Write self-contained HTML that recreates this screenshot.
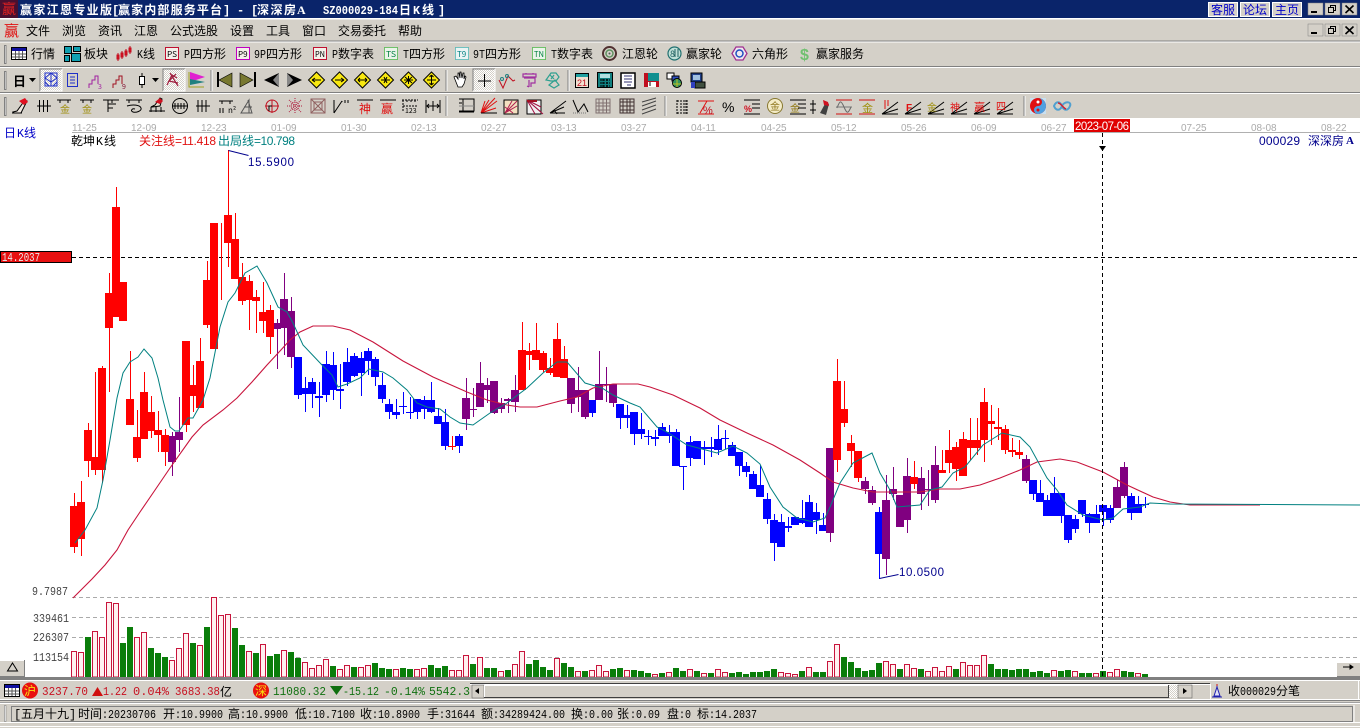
<!DOCTYPE html>
<html><head><meta charset="utf-8"><title>赢家江恩专业版</title>
<style>
html,body{margin:0;padding:0;background:#d4d0c8;width:1360px;height:728px;overflow:hidden}
svg{display:block}
text{font-family:"WenQuanYi Zen Hei","Noto Sans CJK SC","Liberation Sans",sans-serif;font-size:12px;fill:#000;white-space:pre}
.m{font-family:"Liberation Mono","WenQuanYi Zen Hei",monospace}
.a{font-family:"Liberation Sans","WenQuanYi Zen Hei",sans-serif}
.w{fill:#fff;font-weight:bold}
.ax{font-family:"Liberation Sans",sans-serif;font-size:10px;fill:#aaa}
.b{fill:#00008c}
</style></head><body>
<svg width="1360" height="728" viewBox="0 0 1360 728" xmlns="http://www.w3.org/2000/svg">
<defs><pattern id="d" width="2" height="2" patternUnits="userSpaceOnUse"><rect width="2" height="2" fill="#fff"/><rect width="1" height="1" fill="#d4d0c8"/><rect x="1" y="1" width="1" height="1" fill="#d4d0c8"/></pattern></defs>
<rect width="1360" height="728" fill="#d4d0c8"/>
<!-- title -->
<rect width="1360" height="18" fill="#0a246a"/><rect y="18" width="1360" height="1.5" fill="#fff"/>
<rect width="18" height="18" fill="#4a1030"/><text x="2" y="14" font-size="14" style="fill:#e02020;font-size:14px">赢</text>
<text class="w" x="20" y="14" textLength="92">赢家江恩专业版</text>
<text class="w m" x="112" y="14">[</text><text class="w" x="118" y="14" textLength="104">赢家内部服务平台</text><text class="w m" x="223" y="14">]</text>
<text class="w m" x="237" y="14">-</text><text class="w m" x="251" y="14">[</text><text class="w" x="257" y="14" textLength="39">深深房</text>
<text class="w" x="297" y="14" style="font-family:'Liberation Serif',serif">A</text>
<text class="w m" x="323" y="14" textLength="75" lengthAdjust="spacingAndGlyphs">SZ000029-184</text>
<text class="w" x="399" y="14">日</text><text class="w m" x="413" y="14" textLength="7" lengthAdjust="spacingAndGlyphs">K</text><text class="w" x="422" y="14">线</text><text class="w m" x="438" y="14">]</text>
<!-- title buttons -->
<g fill="#d4d0c8" stroke="#fff"><rect x="1208.5" y="2.5" width="29" height="14"/><rect x="1240.5" y="2.5" width="29" height="14"/><rect x="1272.5" y="2.5" width="29" height="14"/></g>
<text x="1211" y="14" style="fill:#0000c8">客服</text><text x="1243" y="14" style="fill:#0000c8">论坛</text><text x="1275" y="14" style="fill:#0000c8">主页</text>
<g id="wb"><rect x="1308" y="3" width="15" height="12" fill="#d4d0c8" stroke="#808080" stroke-width=".5"/><rect x="1325" y="3" width="15" height="12" fill="#d4d0c8" stroke="#808080" stroke-width=".5"/><rect x="1342" y="3" width="15" height="12" fill="#d4d0c8" stroke="#808080" stroke-width=".5"/>
<path d="M1328.5 7.5h5v5h-5zM1330.5 7.5v-2h5v5h-2" fill="none" stroke="#000"/><rect x="1311" y="11" width="6" height="2"/><path d="M1345.5 5.5l8 7.5M1353.5 5.5l-8 7.5" stroke="#000" stroke-width="1.6"/></g>
<g transform="translate(0,21)"><rect x="1308" y="3" width="15" height="12" fill="#d4d0c8" stroke="#808080" stroke-width=".5"/><rect x="1325" y="3" width="15" height="12" fill="#d4d0c8" stroke="#808080" stroke-width=".5"/><rect x="1342" y="3" width="15" height="12" fill="#d4d0c8" stroke="#808080" stroke-width=".5"/>
<path d="M1328.5 7.5h5v5h-5zM1330.5 7.5v-2h5v5h-2" fill="none" stroke="#000"/><rect x="1311" y="11" width="6" height="2"/><path d="M1345.5 5.5l8 7.5M1353.5 5.5l-8 7.5" stroke="#000" stroke-width="1.6"/></g>
<!-- menu -->
<text x="4" y="36" style="fill:#e01010;font-size:15px">赢</text>
<text x="26" y="35">文件</text><text x="62" y="35">浏览</text><text x="98" y="35">资讯</text><text x="134" y="35">江恩</text><text x="170" y="35">公式选股</text><text x="230" y="35">设置</text><text x="266" y="35">工具</text><text x="302" y="35">窗口</text><text x="338" y="35">交易委托</text><text x="398" y="35">帮助</text>
<!-- separators -->
<g fill="#808080"><rect y="40.5" width="1360" height="1"/><rect y="66" width="1360" height="1"/><rect y="92" width="1360" height="1"/></g>
<g fill="#fff"><rect y="41.5" width="1360" height="1"/><rect y="67" width="1360" height="1"/><rect y="93" width="1360" height="1"/></g>
<g stroke="#808080" fill="#fff"><rect x="4.5" y="45.5" width="1.5" height="18"/><rect x="4.5" y="71.5" width="1.5" height="18"/><rect x="4.5" y="97.5" width="1.5" height="18"/></g>
<!-- row 1 -->
<rect x="11.5" y="47.5" width="15" height="12" fill="#fff" stroke="#000"/><rect x="12" y="48" width="14" height="3" fill="#1010a0"/><path d="M12 54h14M12 57h14M15.5 51v8M19 51v8M22.5 51v8" stroke="#555"/>
<text x="31" y="58">行情</text>
<g fill="#10a0b0" stroke="#000"><rect x="64.5" y="46.5" width="7" height="7"/><rect x="73.5" y="46.5" width="7" height="5"/><rect x="64.5" y="55.5" width="5" height="6"/><rect x="71.5" y="53.5" width="9" height="8"/></g>
<text x="84" y="58">板块</text>
<g fill="#e01020" stroke="#c01020"><path d="M118 53v8M122 51v8M126 49v8M130 46v8" stroke-width="1"/><rect x="117" y="55" width="2" height="4"/><rect x="121" y="53" width="2" height="4"/><rect x="125" y="51" width="2" height="4"/><rect x="129" y="48" width="2" height="4"/></g>
<text x="137" y="58" class="m" textLength="6" lengthAdjust="spacingAndGlyphs">K</text><text x="143" y="58">线</text>
<g font-size="8" style="font-family:'Liberation Sans',sans-serif">
<rect x="165.5" y="47.5" width="13" height="12" fill="#f4f0ea" stroke="#c01030"/><text x="167" y="57" style="font-size:8px" textLength="10" lengthAdjust="spacingAndGlyphs">PS</text>
<rect x="236.5" y="47.5" width="13" height="12" fill="#f4f0ea" stroke="#c000c0"/><text x="238" y="57" style="font-size:8px">P9</text>
<rect x="313.5" y="47.5" width="13" height="12" fill="#f4f0ea" stroke="#c01030"/><text x="315" y="57" style="font-size:8px" textLength="10" lengthAdjust="spacingAndGlyphs">PN</text>
<rect x="384.5" y="47.5" width="13" height="12" fill="#eaf4ea" stroke="#00a000" stroke-dasharray="1 1"/><text x="386" y="57" style="font-size:8px;fill:#008040" textLength="10" lengthAdjust="spacingAndGlyphs">TS</text>
<rect x="455.5" y="47.5" width="13" height="12" fill="#eaf4f4" stroke="#00a0a0" stroke-dasharray="1 1"/><text x="457" y="57" style="font-size:8px;fill:#008080">T9</text>
<rect x="532.5" y="47.5" width="13" height="12" fill="#eaf4ea" stroke="#00a000" stroke-dasharray="1 1"/><text x="534" y="57" style="font-size:8px;fill:#008040" textLength="10" lengthAdjust="spacingAndGlyphs">TN</text></g>
<g><text x="184" y="58" class="m" textLength="6" lengthAdjust="spacingAndGlyphs">P</text><text x="190" y="58">四方形</text>
<text x="254" y="58" class="m" textLength="12" lengthAdjust="spacingAndGlyphs">9P</text><text x="266" y="58">四方形</text>
<text x="332" y="58" class="m" textLength="6" lengthAdjust="spacingAndGlyphs">P</text><text x="338" y="58">数字表</text>
<text x="403" y="58" class="m" textLength="6" lengthAdjust="spacingAndGlyphs">T</text><text x="409" y="58">四方形</text>
<text x="473" y="58" class="m" textLength="12" lengthAdjust="spacingAndGlyphs">9T</text><text x="485" y="58">四方形</text>
<text x="551" y="58" class="m" textLength="6" lengthAdjust="spacingAndGlyphs">T</text><text x="557" y="58">数字表</text>
<text x="622" y="58">江恩轮</text><text x="686" y="58">赢家轮</text><text x="752" y="58">六角形</text><text x="816" y="58">赢家服务</text></g>
<g fill="none"><circle cx="609.5" cy="53.5" r="6.5" stroke="#503030" stroke-width="2"/><circle cx="609.5" cy="53.5" r="3.5" stroke="#609060" stroke-width="1.5"/><circle cx="609.5" cy="53.5" r="1" fill="#555"/>
<circle cx="674.5" cy="53.5" r="6.5" stroke="#207070" stroke-width="1.2" fill="#c0e0d8"/><text x="670" y="57" style="font-size:9px;fill:#206060" >8</text><path d="M675 49v8M678 49v8" stroke="#206060"/>
<path d="M736 47h7l4 6.500l-4 6.500h-7l-4-6.500z" stroke="#a03090" stroke-width="1.3" fill="#f0e8f0"/><circle cx="739.500" cy="53.500" r="3.500" stroke="#2050c0" stroke-width="1.500"/></g>
<text x="800" y="60" style="font-size:16px;fill:#70c070;font-family:'Liberation Sans',sans-serif;font-weight:bold">$</text>
<!-- row 2 -->
<text x="13" y="86" style="font-weight:bold;font-size:13px">日</text><path d="M29 78h7l-3.500 4z"/>
<rect x="40" y="69" width="22" height="22" fill="url(#d)"/>
<path d="M40 91V69h22" fill="none" stroke="#808080"/><path d="M62 69v22H40" fill="none" stroke="#fff"/>
<g fill="none" stroke="#2030c8"><path d="M45 73h12v13H45zM45 78l6-5 6 5-6 4zM45 82l4 4M57 82l-4 4M51 73v13"/>
<path d="M67.500 73.500h10v13h-10zM70 77h5M70 80h5M70 83h5"/></g>
<path d="M89 88v-4h3v-4h3v-4h3v8M105 81" fill="none" stroke="#a020a0"/><text x="98" y="89" style="font-size:7px;fill:#a020a0">3</text>
<path d="M113 88v-4h3v-4h3v-4h3v8" fill="none" stroke="#a01020"/><text x="122" y="89" style="font-size:7px;fill:#801030">9</text>
<path d="M142 73v15" stroke="#000"/><rect x="139.500" y="76.500" width="5" height="8" fill="#fff" stroke="#000"/><path d="M152 78h7l-3.500 4z"/>
<rect x="163" y="69" width="22" height="22" fill="url(#d)"/><path d="M163 91V69h22" fill="none" stroke="#808080"/><path d="M185 69v22h-22" fill="none" stroke="#fff"/>
<g fill="none" stroke="#a02040" stroke-width="1.2"><path d="M167 85l5-10 5 3M170 73l8 13M176 74l-7 7 9 2"/></g>
<path d="M189 72v15h15" fill="none" stroke="#a0a020"/><path d="M190 72l15 5-15 5z" fill="#e020d0"/><path d="M190 79l15 3-15 3z" fill="#208080"/>
<path d="M211 70v21" stroke="#808080"/><path d="M212 70v21" stroke="#fff"/>
<g fill="#787830" stroke="#000" stroke-width=".6"><path d="M232 73v14l-13-7z"/><path d="M240 73v14l13-7z"/></g><rect x="217" y="72" width="2" height="15"/><rect x="254" y="72" width="2" height="15"/>
<path d="M279 73l-15 7 15 7z" fill="#000"/><path d="M279 73v14l-6-7z" fill="#888"/><path d="M287 73l15 7-15 7z" fill="#000"/><path d="M287 73v14l6-7z" fill="#888"/>
<g fill="#f8e810" stroke="#000"><path d="M316.500 72l8 8-8 8-8-8z"/><path d="M339.500 72l8 8-8 8-8-8z"/><path d="M362.500 72l8 8-8 8-8-8z"/><path d="M385.500 72l8 8-8 8-8-8z"/><path d="M408.500 72l8 8-8 8-8-8z"/><path d="M431.500 72l8 8-8 8-8-8z"/></g>
<g stroke="#000" fill="none"><path d="M312 80h9M312 80l3-2M312 80l3 2M335 80h9M344 80l-3-2M344 80l-3 2M358 80h9M358 80l2-2M358 80l2 2M367 80l-2-2M367 80l-2 2M381 80h9M384 77l3 6M387 77l-3 6M404 80h9M408.500 76v8M405 77l7 6M412 77l-7 6M431.500 75v10M427 80h9M431.500 75l-2 2M431.500 75l2 2M431.500 85l-2-2M431.500 85l2-2"/></g>
<path d="M446 70v21" stroke="#808080"/><path d="M447 70v21" stroke="#fff"/>
<path d="M456 82l-2-5 2-1 2 3v-6h1l1 5v-6h1l1 6 1-5h1v6l1-3 1 1-2 7-2 3h-4z" fill="#fff" stroke="#000" stroke-width=".8"/>
<rect x="473" y="69" width="22" height="22" fill="url(#d)"/><path d="M473 91V69h22" fill="none" stroke="#808080"/><path d="M495 69v22h-22" fill="none" stroke="#fff"/><path d="M484.500 74v13M478 81h13" stroke="#000"/>
<path d="M499 80l4 8 5-12 5 5 2-1" fill="none" stroke="#c01020"/><circle cx="502" cy="79" r="1.500" fill="none" stroke="#208080"/><circle cx="507" cy="76" r="1.500" fill="none" stroke="#208080"/>
<g fill="none" stroke="#a030a0" stroke-width="1.2"><path d="M523 74h13v3h-13zM526 74v-1M533 74v-1M524 78h11v5h-4v4M529 80v7M529 87l-2-1"/></g>
<g fill="none" stroke="#30a090" stroke-width="1.2"><path d="M546 80l5-7 5 0 3 4-3 4-5 0zM549 85l6-5 4 5-5 3zM550 75l4 4M554 75l-3 4"/></g>
<path d="M568 70v21" stroke="#808080"/><path d="M569 70v21" stroke="#fff"/>
<rect x="575.500" y="73.500" width="13" height="14" fill="#f0e0d0" stroke="#000"/><rect x="576" y="74" width="12" height="3" fill="#20a0a0"/><text x="577" y="86" style="font-size:9px;fill:#c01020;font-family:'Liberation Sans',sans-serif" textLength="10">21</text>
<rect x="597.500" y="72.500" width="15" height="15" fill="#108080" stroke="#000"/><rect x="600" y="74" width="10" height="4" fill="#b0e0e0"/><path d="M600 80h10M600 83h10M600 86h10M603 79v8M607 79v8" stroke="#000" stroke-dasharray="2 1"/>
<rect x="621" y="73" width="14" height="15" fill="#ffffff" stroke="#000" stroke-width="1.500"/><path d="M624 76h8M624 79h8M624 82h8M627 85h4" stroke="#303070"/>
<rect x="644" y="73" width="15" height="14" fill="#c01020"/><rect x="648" y="73" width="11" height="8" fill="#109090"/><rect x="648" y="82" width="8" height="5" fill="#fff"/><path d="M650 82v4" stroke="#000"/>
<rect x="667" y="73" width="7" height="6" fill="#fff" stroke="#000"/><rect x="672" y="76" width="7" height="5" fill="#3050c0" stroke="#000"/><circle cx="677" cy="83" r="4.500" fill="#309060" stroke="#000"/><path d="M673 84h8M677 79v8" stroke="#c0c020"/>
<rect x="691" y="73" width="11" height="9" fill="#20408a" stroke="#000"/><rect x="693" y="75" width="7" height="5" fill="#a0c0e0"/><rect x="695" y="82" width="10" height="6" fill="#405040" stroke="#000"/><rect x="691" y="82" width="4" height="6" fill="#3040c0"/>
<!-- row 3 -->
<g transform="translate(0,1)"><path d="M13 111l4-1 8-11 2 1-6 12-7 0z" fill="#f0e8e0" stroke="#000"/><path d="M19 100l6-3 3 4-4 3z" fill="#e01020"/><path d="M12 112h10" stroke="#000"/></g>
<g fill="none" stroke="#000"><path d="M37 106h14M39.500 100v12M43.500 100v12M47.500 100v12"/>
<path d="M57 100h14M60 100v3M68 100v3M80 100h14M83 100v3M91 100v3"/>
<path d="M103 100h16M108 100v12M108 104h8M108 108h5M112 100v3"/><path d="M126 100h16M129 100v3M139 100v3M127 106c6-2 13-1 14 2s-5 5-8 4-1-4 2-3"/>
<path d="M149 111h16M151 107v5M156 107v5M161 107v5"/><circle cx="180" cy="106" r="7.500"/><path d="M173 106h15M175 103v6M178 103v6M181 103v6M184 103v6"/><path d="M196 106h14M198 100v12M202 100v12M206 100v12"/>
<path d="M219 101h14M222 101v3M230 101v3M220 108v5M223 108v5"/></g>
<text x="228" y="113" style="font-size:8px">n²</text>
<text x="60" y="113" style="font-size:10px;fill:#a09010">金</text><text x="82" y="113" style="font-size:10px;fill:#a09010">金</text>
<path d="M151 107l4-2 5-7 2 1-2 7-8 1z" fill="#e8e0d0" stroke="#000"/><path d="M155 102l5-4 3 3-3 3z" fill="#d01020"/>
<path d="M241 113l8-13v13zM244 107h8M248 100l4 13h-11" fill="none" stroke="#555"/>
<g fill="none" stroke="#c01020"><circle cx="272" cy="106" r="6"/><path d="M265 106h14M272 100v13"/></g><path d="M272 106h-3v5" stroke="#000" fill="none"/>
<g fill="none" stroke="#b02040" stroke-dasharray="1 1"><path d="M287 106h16M295 98v16M289 100l12 12M301 100l-12 12"/><circle cx="295" cy="106" r="4"/></g>
<g fill="none" stroke="#906060"><rect x="311" y="99" width="14" height="14"/><rect x="314" y="102" width="8" height="8"/><path d="M311 99l14 14M325 99l-14 14"/></g>
<path d="M334 113v-13M334 113l8-12M342 101v1M345 100v3M348 100v3" fill="none" stroke="#000"/>
<path d="M357 100h16" stroke="#000"/><text x="359" y="113" style="font-size:12px;fill:#e01010">神</text>
<path d="M380 100h16" stroke="#000"/><text x="381" y="113" style="font-size:12px;fill:#e01010">赢</text>
<path d="M402 100h16M403 100v12M407 100v3M411 100v3M415 100v3M403 106h15" fill="none" stroke="#000" stroke-dasharray="2 1"/><text x="405" y="113" style="font-size:7px">123</text>
<path d="M426 100v13M440 100v13M427 106h12M429 104l-2 2 2 2M437 104l2 2-2 2M433 101v10" fill="none" stroke="#000"/>
<path d="M446 96v20" stroke="#808080"/><path d="M447 96v20" stroke="#fff"/>
<path d="M459 99h15v12h-15M463 99v13M459 112h15M459 103h3" fill="none" stroke="#000"/><path d="M459 106h15" stroke="#888"/>
<g fill="none" stroke="#e01010"><path d="M481 113l16-12M481 113l14-15M481 113l8-13M481 113l4-12M481 113l15-5"/><path d="M481 113h16" stroke="#000"/></g>
<rect x="504" y="100" width="14" height="14" fill="#f4e0c0" stroke="#000"/><path d="M505 113l12-12M505 113l7-12M505 113l12-7M505 107l8 6" stroke="#b02050" fill="none"/>
<rect x="527" y="100" width="14" height="14" fill="#f0f0f0" stroke="#000"/><path d="M527 100l16 14M527 100l14 7M527 100l8 14M527 100l14 12" stroke="#a01040" fill="none"/><rect x="527" y="100" width="10" height="2" fill="#a01020"/>
<path d="M550 113l16-12M550 113l14-6M550 113h15M554 110l3 4" fill="none" stroke="#000"/>
<path d="M573 100l5 12 6-8 4 8" fill="none" stroke="#000"/><path d="M573 113h14" stroke="#777" stroke-dasharray="1 1"/>
<g fill="none" stroke="#807070"><rect x="596" y="99" width="14" height="14"/><path d="M599 99v14M603 99v14M606.500 99v14M596 103h14M596 106h14M596 110h14"/></g>
<g fill="none" stroke="#403030"><rect x="620" y="99" width="14" height="14"/><path d="M623 99v14M627 99v14M630 99v14M620 102h14M620 106h14M620 110h14"/></g>
<path d="M642 106l14-5M642 110l14-5M642 114l14-5M642 102l14-4" fill="none" stroke="#444"/>
<path d="M665 96v20" stroke="#808080"/><path d="M666 96v20" stroke="#fff"/>
<path d="M677 100v14M677 101h12M680 104h8M680 107h8M680 110h8M677 113h12M686 100v14" fill="none" stroke="#000" stroke-dasharray="2 1"/>
<path d="M698 101h16M698 114h16M700 113l7-12" fill="none" stroke="#e01010"/><text x="703" y="114" style="font-size:11px;fill:#c01020;font-family:'Liberation Sans',sans-serif">%</text>
<text x="722" y="112" style="font-size:14px;font-family:'Liberation Sans',sans-serif">%</text>
<path d="M744 100h16M744 114h16" stroke="#000"/><path d="M752 104h8M752 108h8" stroke="#000"/><text x="744" y="112" style="font-size:9px;fill:#d01020;font-family:'Liberation Sans',sans-serif;font-weight:bold">%</text>
<circle cx="775" cy="106" r="7.500" fill="#f4ecc8" stroke="#887830"/><text x="770" y="110" style="font-size:10px;fill:#907820">金</text>
<path d="M790 100h16M790 114h16M798 104h8M798 108h8" stroke="#000"/><text x="790" y="112" style="font-size:10px;fill:#907810">金</text>
<path d="M813 100v14M810 104h6M810 110h6" stroke="#000"/><path d="M820 113l6-11 3 2-3 11z" fill="#404040"/><path d="M823 100l5 2 1 4-5-1z" fill="#d01020"/>
<path d="M836 100h16M836 114h16" stroke="#d01010"/><path d="M837 108c3-8 4-8 7-1s4 7 7 0" fill="none" stroke="#666"/><path d="M836 107h16" stroke="#777"/>
<path d="M859 100h16M859 114h16" stroke="#d01010"/><text x="862" y="112" style="font-size:11px;fill:#a09010">金</text>
<path d="M882 114l16-12M882 114l16-5M882 114h16" fill="none" stroke="#000"/><path d="M885 100v9" stroke="#e01010"/><path d="M888 100v6" stroke="#e01010"/>
<path d="M905 114l16-12M905 114l16-5M905 114h16" fill="none" stroke="#000"/><text x="906" y="111" style="font-size:10px;fill:#e01010;font-weight:bold;font-family:'Liberation Sans',sans-serif">F</text>
<path d="M928 114l16-12M928 114l16-5M928 114h16" fill="none" stroke="#000"/><text x="927" y="111" style="font-size:10px;fill:#a09010">金</text>
<path d="M951 114l16-12M951 114l16-5M951 114h16" fill="none" stroke="#000"/><text x="950" y="111" style="font-size:10px;fill:#e01010">神</text>
<path d="M974 114l16-12M974 114l16-5M974 114h16" fill="none" stroke="#000"/><text x="974" y="111" style="font-size:11px;fill:#e01010">赢</text>
<path d="M997 114l16-12M997 114l16-5M997 114h16" fill="none" stroke="#000"/><text x="996" y="110" style="font-size:10px;fill:#e01010">四</text>
<path d="M1024 96v20" stroke="#808080"/><path d="M1025 96v20" stroke="#fff"/>
<rect x="1030" y="98" width="16" height="16" fill="#c8e0f0"/><circle cx="1038" cy="106" r="8" fill="#e01010"/><path d="M1038 98a8 8 0 0 1 0 16a4 4 0 0 1 0-8a4 4 0 0 0 0-8z" fill="#50a0e0"/><circle cx="1038" cy="102" r="1.500" fill="#fff"/><circle cx="1038" cy="110" r="1.500" fill="#e01010"/>
<path d="M1054 106c2-5 6-5 8 0s6 5 8 0s-6-5-8 0s-6 5-8 0z" fill="none" stroke="#50a0d0" stroke-width="2"/><path d="M1058 103c3 0 5 5 8 6" fill="none" stroke="#d02030" stroke-width="1.500"/>
<!-- chart bg -->
<rect y="118" width="1360" height="559" fill="#fff"/>
<path d="M72 132.500H1360" stroke="#b0b0b0"/>
<g class="ax"><text class="ax" x="72" y="131">11-25</text><text class="ax" x="131" y="131">12-09</text><text class="ax" x="201" y="131">12-23</text><text class="ax" x="271" y="131">01-09</text><text class="ax" x="341" y="131">01-30</text><text class="ax" x="411" y="131">02-13</text><text class="ax" x="481" y="131">02-27</text><text class="ax" x="551" y="131">03-13</text><text class="ax" x="621" y="131">03-27</text><text class="ax" x="691" y="131">04-11</text><text class="ax" x="761" y="131">04-25</text><text class="ax" x="831" y="131">05-12</text><text class="ax" x="901" y="131">05-26</text><text class="ax" x="971" y="131">06-09</text><text class="ax" x="1041" y="131">06-27</text><text class="ax" x="1181" y="131">07-25</text><text class="ax" x="1251" y="131">08-08</text><text class="ax" x="1321" y="131">08-22</text></g>
<rect x="1074" y="119" width="56" height="13" fill="#e00000"/><text class="a" x="1075" y="130" style="fill:#fff;font-size:11.500px" textLength="54">2023-07-06</text>
<text x="4" y="137" style="fill:#0000c8">日</text><text class="m" x="17" y="137" style="fill:#0000c8" textLength="7" lengthAdjust="spacingAndGlyphs">K</text><text x="24" y="137" style="fill:#0000c8">线</text>
<text x="71" y="145">乾坤</text><text class="m" x="96" y="145" textLength="7" lengthAdjust="spacingAndGlyphs">K</text><text x="104" y="145">线</text>
<text x="139" y="145" style="fill:#e01010">关注线</text><text class="a" x="175" y="145" style="fill:#e01010" textLength="41">=11.418</text>
<text x="218" y="145" style="fill:#008080">出局线</text><text class="a" x="254" y="145" style="fill:#008080" textLength="41">=10.798</text>
<text class="a" x="1259" y="145" style="fill:#00008c" textLength="41">000029</text><text x="1308" y="145" style="fill:#00008c">深深房</text><text x="1346" y="144" style="fill:#00008c;font-family:'Liberation Serif',serif;font-weight:bold;font-size:11px">A</text>
<!-- grid -->
<g stroke="#aaa" stroke-dasharray="4 3"><path d="M72 597.500H1360M72 617.500H1360M72 637.500H1360M72 657.500H1360"/></g>
<path d="M72 257.500H1360" stroke="#000" stroke-dasharray="4 3"/>
<rect x="0.500" y="251.500" width="71" height="11" fill="#e81010" stroke="#000"/><text class="m" x="2" y="261" style="fill:#e8e8e8" textLength="38" lengthAdjust="spacingAndGlyphs">14.2037</text>
<text class="m" x="32" y="595" style="fill:#444" textLength="36" lengthAdjust="spacingAndGlyphs">9.7987</text>
<text class="m" x="33" y="622" style="fill:#444" textLength="36" lengthAdjust="spacingAndGlyphs">339461</text>
<text class="m" x="33" y="641" style="fill:#444" textLength="36" lengthAdjust="spacingAndGlyphs">226307</text>
<text class="m" x="33" y="661" style="fill:#444" textLength="36" lengthAdjust="spacingAndGlyphs">113154</text>
<!-- volumes -->
<path fill="#0a7d0a" d="M85 637h6V677h-6zM120 643h6V677h-6zM127 627h6V677h-6zM148 648h6V677h-6zM155 653h6V677h-6zM162 657h6V677h-6zM190 643h6V677h-6zM204 627h6V677h-6zM232 628h6V677h-6zM239 645h6V677h-6zM253 653h6V677h-6zM267 656h6V677h-6zM274 654h6V677h-6zM288 652h6V677h-6zM295 658h6V677h-6zM330 666h6V677h-6zM351 667h6V677h-6zM372 663h6V677h-6zM379 668h6V677h-6zM386 669h6V677h-6zM400 668h6V677h-6zM407 669h6V677h-6zM428 665h6V677h-6zM435 668h6V677h-6zM442 666h6V677h-6zM470 664h6V677h-6zM484 668h6V677h-6zM491 668h6V677h-6zM505 670h6V677h-6zM526 664h6V677h-6zM533 660h6V677h-6zM540 667h6V677h-6zM547 670h6V677h-6zM561 663h6V677h-6zM568 667h6V677h-6zM582 671h6V677h-6zM610 669h6V677h-6zM617 668h6V677h-6zM631 670h6V677h-6zM638 671h6V677h-6zM645 673h6V677h-6zM659 673h6V677h-6zM673 668h6V677h-6zM680 671h6V677h-6zM694 671h6V677h-6zM708 673h6V677h-6zM729 673h6V677h-6zM736 672h6V677h-6zM743 674h6V677h-6zM750 672h6V677h-6zM757 672h6V677h-6zM764 671h6V677h-6zM771 669h6V677h-6zM799 671h6V677h-6zM813 672h6V677h-6zM820 672h6V677h-6zM841 657h6V677h-6zM848 662h6V677h-6zM855 668h6V677h-6zM862 671h6V677h-6zM869 670h6V677h-6zM876 663h6V677h-6zM897 669h6V677h-6zM918 669h6V677h-6zM953 669h6V677h-6zM988 664h6V677h-6zM995 669h6V677h-6zM1002 669h6V677h-6zM1009 670h6V677h-6zM1016 669h6V677h-6zM1023 669h6V677h-6zM1030 672h6V677h-6zM1037 671h6V677h-6zM1044 673h6V677h-6zM1058 671h6V677h-6zM1065 670h6V677h-6zM1079 673h6V677h-6zM1086 673h6V677h-6zM1100 671h6V677h-6zM1121 671h6V677h-6zM1128 672h6V677h-6zM1142 674h6V677h-6z"/>
<path fill="#fff0f0" stroke="#c8143c" d="M71.500 651.500h5V677h-5zM78.500 652.500h5V677h-5zM92.500 631.500h5V677h-5zM99.500 637.500h5V677h-5zM106.500 602.500h5V677h-5zM113.500 603.500h5V677h-5zM134.500 637.500h5V677h-5zM141.500 632.500h5V677h-5zM169.500 660.500h5V677h-5zM176.500 648.500h5V677h-5zM183.500 633.500h5V677h-5zM197.500 645.500h5V677h-5zM211.500 597.500h5V677h-5zM218.500 615.500h5V677h-5zM225.500 614.500h5V677h-5zM246.500 651.500h5V677h-5zM260.500 644.500h5V677h-5zM281.500 650.500h5V677h-5zM302.500 662.500h5V677h-5zM309.500 668.500h5V677h-5zM316.500 665.500h5V677h-5zM323.500 659.500h5V677h-5zM337.500 669.500h5V677h-5zM344.500 665.500h5V677h-5zM358.500 667.500h5V677h-5zM365.500 665.500h5V677h-5zM393.500 669.500h5V677h-5zM414.500 669.500h5V677h-5zM421.500 668.500h5V677h-5zM449.500 670.500h5V677h-5zM456.500 670.500h5V677h-5zM463.500 655.500h5V677h-5zM477.500 657.500h5V677h-5zM498.500 671.500h5V677h-5zM512.500 664.500h5V677h-5zM519.500 651.500h5V677h-5zM554.500 658.500h5V677h-5zM575.500 671.500h5V677h-5zM589.500 670.500h5V677h-5zM596.500 665.500h5V677h-5zM603.500 671.500h5V677h-5zM624.500 670.500h5V677h-5zM652.500 674.500h5V677h-5zM666.500 672.500h5V677h-5zM687.500 669.500h5V677h-5zM701.500 673.500h5V677h-5zM715.500 669.500h5V677h-5zM722.500 672.500h5V677h-5zM778.500 672.500h5V677h-5zM785.500 673.500h5V677h-5zM792.500 674.500h5V677h-5zM806.500 667.500h5V677h-5zM827.500 661.500h5V677h-5zM834.500 644.500h5V677h-5zM883.500 661.500h5V677h-5zM890.500 664.500h5V677h-5zM904.500 664.500h5V677h-5zM911.500 668.500h5V677h-5zM925.500 671.500h5V677h-5zM932.500 667.500h5V677h-5zM939.500 671.500h5V677h-5zM946.500 666.500h5V677h-5zM960.500 662.500h5V677h-5zM967.500 665.500h5V677h-5zM974.500 665.500h5V677h-5zM981.500 655.500h5V677h-5zM1051.500 670.500h5V677h-5zM1072.500 671.500h5V677h-5zM1093.500 673.500h5V677h-5zM1107.500 672.500h5V677h-5zM1114.500 669.500h5V677h-5zM1135.500 673.500h5V677h-5z"/>
<!-- blue candles -->
<path fill="#0000ff" d="M298 357h1V399h-1zM294 357h8V395h-8zM305 377h1V412h-1zM301 388h8V394h-8zM312 378h1V408h-1zM308 382h8V394h-8zM319 382h1V417h-1zM315 396h8V398h-8zM326 351h1V402h-1zM322 364h8V395h-8zM333 352h1V400h-1zM329 365h8V390h-8zM340 364h1V409h-1zM336 389h8V391h-8zM347 348h1V386h-1zM343 362h8V382h-8zM354 353h1V377h-1zM350 356h8V376h-8zM361 352h1V396h-1zM357 358h8V373h-8zM368 348h1V375h-1zM364 351h8V361h-8zM375 357h1V386h-1zM371 359h8V377h-8zM382 373h1V403h-1zM378 385h8V399h-8zM389 399h1V419h-1zM385 404h8V412h-8zM396 399h1V419h-1zM392 412h8V415h-8zM403 392h1V414h-1zM399 406h8V407h-8zM410 397h1V419h-1zM406 412h8V413h-8zM417 399h1V419h-1zM413 399h8V412h-8zM424 396h1V419h-1zM420 400h8V409h-8zM431 382h1V413h-1zM427 400h8V412h-8zM438 408h1V424h-1zM434 416h8V424h-8zM445 409h1V450h-1zM441 422h8V446h-8zM459 434h1V453h-1zM455 436h8V446h-8z
M592 400h1V417h-1zM588 400h8V413h-8zM620 404h1V429h-1zM616 404h8V418h-8zM627 405h1V428h-1zM623 415h8V418h-8zM634 412h1V445h-1zM630 412h8V434h-8zM641 413h1V439h-1zM637 429h8V434h-8zM648 430h1V445h-1zM644 436h8V437h-8zM655 430h1V446h-1zM651 437h8V439h-8zM662 423h1V436h-1zM658 427h8V436h-8zM669 425h1V443h-1zM665 432h8V436h-8zM676 429h1V466h-1zM672 432h8V466h-8zM683 466h1V490h-1zM679 466h8V467h-8zM690 436h1V466h-1zM686 442h8V458h-8zM697 441h1V459h-1zM693 441h8V459h-8zM704 441h1V465h-1zM700 447h8V449h-8zM711 437h1V457h-1zM707 447h8V449h-8zM718 425h1V455h-1zM714 439h8V450h-8zM725 430h1V449h-1zM721 438h8V439h-8zM732 442h1V456h-1zM728 445h8V456h-8zM739 452h1V476h-1zM735 452h8V466h-8zM746 462h1V477h-1zM742 466h8V472h-8zM753 471h1V489h-1zM749 474h8V489h-8zM760 465h1V497h-1zM756 485h8V497h-8zM767 493h1V524h-1zM763 499h8V519h-8zM774 514h1V561h-1zM770 520h8V543h-8zM781 514h1V547h-1zM777 522h8V547h-8zM788 517h1V532h-1zM784 526h8V528h-8zM795 517h1V525h-1zM791 517h8V525h-8zM802 500h1V524h-1zM798 518h8V523h-8zM809 495h1V527h-1zM805 502h8V527h-8zM816 503h1V534h-1zM812 512h8V520h-8zM823 513h1V531h-1zM819 525h8V531h-8zM879 507h1V579h-1zM875 512h8V554h-8z
M1033 480h1V500h-1zM1029 480h8V494h-8zM1040 480h1V502h-1zM1036 493h8V502h-8zM1047 495h1V516h-1zM1043 500h8V516h-8zM1054 477h1V516h-1zM1050 493h8V516h-8zM1061 493h1V523h-1zM1057 493h8V516h-8zM1068 515h1V543h-1zM1064 515h8V540h-8zM1075 515h1V533h-1zM1071 519h8V529h-8zM1082 500h1V517h-1zM1078 500h8V514h-8zM1089 513h1V533h-1zM1085 514h8V523h-8zM1096 505h1V523h-1zM1092 514h8V523h-8zM1103 505h1V526h-1zM1099 505h8V512h-8zM1110 505h1V523h-1zM1106 508h8V520h-8zM1131 493h1V520h-1zM1127 496h8V513h-8zM1138 496h1V513h-1zM1134 504h8V513h-8zM1145 497h1V508h-1zM1141 504h8V505h-8z"/>
<!-- purple candles -->
<path fill="#800080" d="M172 432h1V476h-1zM168 436h8V462h-8zM179 397h1V452h-1zM175 432h8V440h-8zM277 319h1V369h-1zM273 323h8V329h-8zM284 273h1V355h-1zM280 299h8V328h-8zM291 297h1V368h-1zM287 311h8V357h-8zM466 378h1V430h-1zM462 398h8V419h-8zM473 388h1V417h-1zM469 409h8V410h-8zM480 362h1V407h-1zM476 383h8V407h-8zM487 378h1V403h-1zM483 385h8V390h-8zM494 381h1V414h-1zM490 381h8V413h-8zM501 398h1V413h-1zM497 403h8V409h-8zM508 398h1V413h-1zM504 399h8V401h-8zM515 375h1V412h-1zM511 390h8V402h-8zM571 378h1V413h-1zM567 378h8V404h-8zM578 367h1V412h-1zM574 390h8V397h-8zM585 390h1V419h-1zM581 390h8V417h-8zM599 351h1V400h-1zM595 384h8V400h-8zM606 367h1V402h-1zM602 384h8V385h-8zM613 384h1V407h-1zM609 384h8V403h-8zM830 448h1V542h-1zM826 448h8V533h-8zM865 477h1V494h-1zM861 481h8V489h-8zM872 486h1V505h-1zM868 490h8V503h-8zM886 475h1V575h-1zM882 500h8V559h-8zM893 467h1V500h-1zM889 489h8V494h-8zM900 495h1V527h-1zM896 495h8V527h-8zM907 458h1V533h-1zM903 476h8V520h-8zM921 467h1V510h-1zM917 478h8V494h-8zM928 470h1V506h-1zM924 489h8V490h-8zM935 446h1V503h-1zM931 465h8V500h-8zM1026 455h1V483h-1zM1022 459h8V481h-8zM1117 480h1V508h-1zM1113 487h8V508h-8zM1124 462h1V498h-1zM1120 467h8V496h-8z"/>
<!-- red candles -->
<path fill="#ff0000" d="M74 493h1V553h-1zM70 506h8V547h-8zM81 481h1V556h-1zM77 502h8V539h-8zM88 423h1V477h-1zM84 430h8V461h-8zM95 372h1V475h-1zM91 457h8V470h-8zM102 366h1V483h-1zM98 368h8V470h-8zM109 273h1V392h-1zM105 293h8V328h-8zM116 187h1V317h-1zM112 207h8V317h-8zM119 282h8V321h-8zM130 351h1V425h-1zM126 399h8V425h-8zM137 410h1V462h-1zM133 437h8V458h-8zM144 372h1V439h-1zM140 392h8V439h-8zM151 396h1V438h-1zM147 412h8V431h-8zM158 411h1V452h-1zM154 430h8V435h-8zM165 429h1V466h-1zM161 435h8V452h-8zM186 341h1V432h-1zM182 341h8V425h-8zM193 365h1V412h-1zM189 385h8V396h-8zM200 338h1V408h-1zM196 361h8V408h-8zM207 261h1V328h-1zM203 280h8V325h-8zM214 223h1V349h-1zM210 223h8V349h-8zM221 223h1V300h-1zM228 150h1V267h-1zM224 215h8V243h-8zM235 213h1V279h-1zM231 239h8V279h-8zM242 263h1V305h-1zM238 277h8V301h-8zM249 275h1V330h-1zM245 281h8V300h-8zM256 290h1V333h-1zM252 297h8V301h-8zM263 282h1V333h-1zM259 312h8V321h-8zM270 305h1V354h-1zM266 310h8V337h-8z
M452 436h1V450h-1zM448 446h8V447h-8zM522 322h1V390h-1zM518 350h8V390h-8zM529 343h1V370h-1zM525 351h8V355h-8zM536 323h1V360h-1zM532 350h8V360h-8zM543 351h1V372h-1zM539 353h8V370h-8zM550 358h1V375h-1zM546 368h8V373h-8zM557 323h1V377h-1zM553 339h8V377h-8zM564 346h1V378h-1zM560 359h8V378h-8zM837 359h1V472h-1zM833 381h8V460h-8zM844 381h1V427h-1zM840 409h8V423h-8zM851 435h1V467h-1zM847 443h8V451h-8zM858 451h1V482h-1zM854 451h8V478h-8zM914 461h1V489h-1zM910 477h8V484h-8zM942 450h1V473h-1zM938 470h8V473h-8zM949 430h1V473h-1zM945 450h8V463h-8zM956 442h1V481h-1zM952 447h8V469h-8zM963 432h1V476h-1zM959 439h8V476h-8zM970 418h1V460h-1zM966 440h8V448h-8zM977 418h1V455h-1zM973 440h8V448h-8zM984 388h1V462h-1zM980 402h8V440h-8zM991 405h1V445h-1zM987 421h8V424h-8zM998 408h1V440h-1zM994 427h8V429h-8zM1005 425h1V454h-1zM1001 429h8V450h-8zM1012 438h1V457h-1zM1008 450h8V452h-8zM1019 440h1V459h-1zM1015 452h8V455h-8z"/>
<!-- MA lines -->
<polyline fill="none" stroke="#c8143c" stroke-width="1.100" points="73,598 92,579 105,565 117,550 128,530 140,512 153,493 170,468 192,437 203,425 223,410 237,398 252,382 267,365 280,351 290,340 300,332 313,326 333,326 350,330 373,342 403,361 433,377 467,392 487,400 507,405 520,407 537,407 560,401 577,397 593,388 613,384 638,384 650,387 673,395 700,408 720,420 747,433 773,445 800,460 820,473 833,482 853,488 873,492 893,492 920,492 940,489 960,489 980,485 1000,478 1020,470 1037,462 1060,459 1077,462 1103,472 1127,485 1153,497 1170,502 1190,505 1260,505"/>
<polyline fill="none" stroke="#008080" stroke-width="1" points="75,543 85,530 97,508 103,480 110,440 117,398 123,373 130,362 138,357 144,349 152,358 158,378 163,400 170,427 175,431 179,431 188,418 193,418 203,400 210,378 220,327 228,302 235,293 245,273 257,266 267,283 278,307 287,312 293,323 303,345 322,365 332,375 338,387 347,384 360,378 369,369 383,372 393,378 407,390 417,403 427,407 440,409 450,417 460,423 473,425 490,413 507,403 527,388 543,373 557,362 567,362 585,383 602,388 613,395 630,403 640,407 657,427 667,432 687,445 717,453 733,446 747,453 760,464 770,487 783,507 797,518 813,522 825,518 830,507 840,483 853,463 872,453 880,473 890,490 897,507 920,505 930,490 942,487 953,473 965,467 983,445 1002,433 1020,437 1030,447 1047,478 1057,490 1067,505 1083,515 1103,520 1113,518 1123,509 1140,507 1150,503 1170,504 1360,505"/>
<!-- labels -->
<path d="M228.500 150.500l20 5" stroke="#00008c" fill="none"/><text class="a" x="248" y="166" style="fill:#00008c;font-size:11.500px" textLength="46">15.5900</text>
<path d="M879.500 578.500l19-4" stroke="#00008c" fill="none"/><text class="a" x="899" y="576" style="fill:#00008c;font-size:11.500px" textLength="45">10.0500</text>
<path d="M1102.500 133V677" stroke="#000" stroke-dasharray="4 3"/><path d="M1099 146h7l-3.500 5z"/>
<!-- small buttons -->
<rect x="0" y="660" width="25" height="17" fill="#d4d0c8"/><path d="M0 676.500h25M24.500 660v17" stroke="#808080"/><path d="M0 660.500h24" stroke="#fff"/><path d="M12.500 663l5 8h-10z" fill="none" stroke="#000"/>
<rect x="1336" y="662" width="24" height="15" fill="#d4d0c8"/><path d="M1336 676.500h24" stroke="#808080"/><path d="M1336 662.500h24M1336.500 662v15" stroke="#fff"/><path d="M1343 667h10M1353 667l-3-2v4z" stroke="#000"/>
<!-- bottom -->
<rect y="677" width="1360" height="3" fill="#808080"/>
<rect x="4.500" y="684.500" width="15" height="12" fill="#fff" stroke="#000"/><rect x="5" y="685" width="14" height="3" fill="#1010a0"/><path d="M5 691h14M5 694h14M8.500 688v8M12 688v8M15.500 688v8" stroke="#555"/>
<circle cx="30" cy="690.500" r="8" fill="#e81010"/><text x="24" y="695" style="fill:#f8e010;font-size:12px">沪</text>
<g class="m"><text class="m" x="42" y="695" style="fill:#c81020" textLength="46" lengthAdjust="spacingAndGlyphs">3237.70</text><path d="M92 696l5.500-9 5.500 9z" fill="#d01010"/><text class="m" x="103" y="695" style="fill:#c81020" textLength="24" lengthAdjust="spacingAndGlyphs">1.22</text><text class="m" x="133" y="695" style="fill:#c81020" textLength="36" lengthAdjust="spacingAndGlyphs">0.04%</text><text class="m" x="175" y="695" style="fill:#c81020" textLength="45" lengthAdjust="spacingAndGlyphs">3683.38</text></g><text x="220" y="696">亿</text>
<circle cx="261" cy="690.500" r="8" fill="#e81010"/><text x="255" y="695" style="fill:#f8e010;font-size:12px">深</text>
<text class="m" x="273" y="695" style="fill:#107010" textLength="53" lengthAdjust="spacingAndGlyphs">11080.32</text><path d="M330 686h13l-6.500 9z" fill="#107010"/><text class="m" x="343" y="695" style="fill:#107010" textLength="36" lengthAdjust="spacingAndGlyphs">-15.12</text><text class="m" x="384" y="695" style="fill:#107010" textLength="41" lengthAdjust="spacingAndGlyphs">-0.14%</text><text class="m" x="429" y="695" style="fill:#107010" textLength="41" lengthAdjust="spacingAndGlyphs">5542.3</text>
<rect x="470" y="681" width="700" height="18" fill="#d4d0c8"/>
<path d="M470 683.500H1210" stroke="#404040"/><path d="M470 684.500H1210" stroke="#fff"/>
<rect x="472" y="685" width="12" height="13" fill="#d4d0c8" stroke="#555" stroke-width=".5"/><path d="M479 688v6l-4-3z"/>
<rect x="484" y="685" width="684" height="12" fill="#d4d0c8"/><path d="M484.500 697V685.500H1168" fill="none" stroke="#fff"/><path d="M484 697.500H1168.500V685" fill="none" stroke="#404040"/>
<rect x="1169" y="685" width="9" height="13" fill="url(#d)"/><rect x="1178" y="685" width="14" height="13" fill="#d4d0c8" stroke="#555" stroke-width=".5"/><path d="M1183 688v6l4-3z"/>
<path d="M0 680.500H1360" stroke="#fff"/><path d="M0 699.500H1360" stroke="#fff"/><path d="M0 700.500H1360" stroke="#808080" stroke-width="1"/><path d="M0 702.500H1360" stroke="#a0a0a0"/><path d="M0 703.500H1360" stroke="#fff"/>
<path d="M1210.500 700V684M1358.500 680V700" stroke="#fff"/>
<path d="M1217 684v3M1214 696l3-9 3 9zM1212 697h10" stroke="#2020b0" fill="#e0e0f8"/><path d="M1217 684v2" stroke="#d01010"/>
<text x="1228" y="695">收</text><text class="m" x="1240" y="695" textLength="36" lengthAdjust="spacingAndGlyphs">000029</text><text x="1276" y="695">分笔</text>
<!-- info bar -->
<rect x="4.500" y="705.500" width="1.500" height="16" fill="#fff" stroke="#808080" stroke-width=".6"/>
<rect x="11.500" y="706.500" width="1341" height="15" fill="#d4d0c8" stroke="#808080"/><path d="M0 722.500H1360" stroke="#fff"/><path d="M0 726.500H1360" stroke="#fff"/><path d="M1354 705v17" stroke="#fff"/>
<text class="m" x="14" y="718">[</text><text x="21" y="718">五月十九</text><text class="m" x="69" y="718">]</text>
<text x="78" y="718">时间</text><text class="m" x="102" y="718" textLength="54" lengthAdjust="spacingAndGlyphs">:20230706</text>
<text x="163" y="718">开</text><text class="m" x="175" y="718" textLength="48" lengthAdjust="spacingAndGlyphs">:10.9900</text>
<text x="228" y="718">高</text><text class="m" x="240" y="718" textLength="48" lengthAdjust="spacingAndGlyphs">:10.9900</text>
<text x="295" y="718">低</text><text class="m" x="307" y="718" textLength="48" lengthAdjust="spacingAndGlyphs">:10.7100</text>
<text x="360" y="718">收</text><text class="m" x="372" y="718" textLength="48" lengthAdjust="spacingAndGlyphs">:10.8900</text>
<text x="427" y="718">手</text><text class="m" x="439" y="718" textLength="36" lengthAdjust="spacingAndGlyphs">:31644</text>
<text x="481" y="718">额</text><text class="m" x="493" y="718" textLength="72" lengthAdjust="spacingAndGlyphs">:34289424.00</text>
<text x="571" y="718">换</text><text class="m" x="583" y="718" textLength="30" lengthAdjust="spacingAndGlyphs">:0.00</text>
<text x="617" y="718">张</text><text class="m" x="630" y="718" textLength="30" lengthAdjust="spacingAndGlyphs">:0.09</text>
<text x="667" y="718">盘</text><text class="m" x="679" y="718" textLength="12" lengthAdjust="spacingAndGlyphs">:0</text>
<text x="697" y="718">标</text><text class="m" x="709" y="718" textLength="48" lengthAdjust="spacingAndGlyphs">:14.2037</text>
</svg>
</body></html>
